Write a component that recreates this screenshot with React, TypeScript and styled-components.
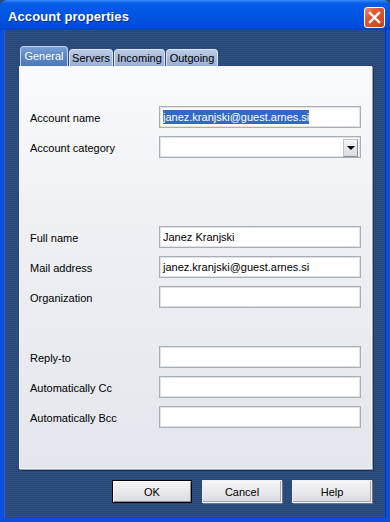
import React from "react";
import styled, { createGlobalStyle } from "styled-components";

const Global = createGlobalStyle`
  html, body { margin: 0; padding: 0; background: #2b4a79; }
  body { font-family: "Liberation Sans", Arial, sans-serif; font-size: 11px; }
`;

const Window = styled.div`
  width: 390px;
  height: 522px;
  display: flex;
  flex-direction: column;
  box-sizing: border-box;
  overflow: hidden;
`;

const TitleBar = styled.div`
  height: 30px;
  flex: none;
  display: flex;
  align-items: center;
  justify-content: space-between;
  padding: 3px 5px 0 8px;
  box-sizing: border-box;
  border-radius: 7px 7px 0 0;
  background: linear-gradient(
    to bottom,
    #3a8cf8 0px,
    #0a5ee8 3px,
    #0058e6 10px,
    #0053e0 20px,
    #0049d6 28px,
    #003fc8 30px
  );
`;

const Title = styled.span`
  color: #fff;
  font-weight: bold;
  font-size: 13px;
  letter-spacing: 0.1px;
  text-shadow: 1px 1px 0 #0b2b8f;
`;

const CloseButton = styled.div`
  width: 21px;
  height: 21px;
  box-sizing: border-box;
  border: 1px solid #fff;
  border-radius: 3px;
  background: linear-gradient(135deg, #f08a6a 0%, #e2582f 35%, #c9421c 100%);
  display: flex;
  align-items: center;
  justify-content: center;
  margin-top: 1px;
`;

const Body = styled.div`
  flex: 1;
  display: flex;
  flex-direction: column;
  border-left: 4px solid #0a4fe0;
  border-right: 4px solid #0a4fe0;
  border-bottom: 4px solid #0a4fe0;
  box-shadow: inset 1px 0 0 #1c64f0, inset -1px 0 0 #0038c0;
  padding: 16px 14px 0 15px;
  background: repeating-linear-gradient(
    to bottom,
    #2e4f81 0px,
    #2e4f81 1px,
    #284676 1px,
    #284676 2px
  );
`;

const TabRow = styled.div`
  display: flex;
  align-items: flex-end;
  height: 20px;
  padding-left: 1px;
`;

const Tab = styled.div<{ $active?: boolean; $w: number }>`
  box-sizing: border-box;
  width: ${(p) => p.$w}px;
  height: ${(p) => (p.$active ? "20px" : "17px")};
  padding-top: ${(p) => (p.$active ? "2px" : "1px")};
  margin-right: 1px;
  text-align: center;
  white-space: nowrap;
  border: 1px solid ${(p) => (p.$active ? "#c7d5ec" : "#dce5f3")};
  border-bottom: none;
  border-radius: 4px 4px 0 0;
  font-size: 11px;
  line-height: 15px;
  color: ${(p) => (p.$active ? "#fff" : "#000")};
  background: ${(p) =>
    p.$active
      ? "linear-gradient(to bottom, #7aa0d6 0%, #5a86c4 50%, #4b78b9 100%)"
      : "linear-gradient(to bottom, #bccbe6 0%, #a6b9da 60%, #9aafd3 100%)"};
`;

const Panel = styled.div`
  box-sizing: border-box;
  width: 353px;
  height: 403px;
  border: 1px solid #f4f5f8;
  box-shadow: 1px 1px 0 #9aa3b4, 2px 2px 0 #1d3357;
  background: linear-gradient(
    to bottom,
    #f9fafc 0%,
    #eef0f4 40%,
    #e3e6ec 100%
  );
  padding: 39px 10px 0 10px;
  display: flex;
  flex-direction: column;
`;

const Group = styled.div<{ $gap: number }>`
  display: flex;
  flex-direction: column;
  gap: 8px;
  margin-top: ${(p) => p.$gap}px;
`;

const Row = styled.div`
  display: flex;
  align-items: center;
  height: 22px;
`;

const Label = styled.span`
  width: 129px;
  flex: none;
  color: #000;
  font-size: 11px;
  padding-top: 1px;
`;

const Field = styled.div`
  box-sizing: border-box;
  width: 202px;
  height: 22px;
  border: 1px solid #a9adb5;
  box-shadow: inset 0 0 0 1px #dfe2e7;
  background: #fff;
  display: flex;
  align-items: center;
  padding: 0 3px;
  font-size: 11px;
  color: #000;
  position: relative;
`;

const Selected = styled.span`
  background: #316ac5;
  color: #fff;
  line-height: 14px;
`;

const DropButton = styled.div`
  position: absolute;
  right: 2px;
  top: 2px;
  width: 15px;
  height: 18px;
  box-sizing: border-box;
  border: 1px solid #c2c5cb;
  border-right-color: #8a8e96;
  border-bottom-color: #8a8e96;
  background: linear-gradient(to bottom, #f4f4f6, #d8dbe0);
  display: flex;
  align-items: center;
  justify-content: center;
`;

const Arrow = styled.div`
  width: 0;
  height: 0;
  border-left: 4px solid transparent;
  border-right: 4px solid transparent;
  border-top: 4px solid #000;
`;

const ButtonRow = styled.div`
  display: flex;
  justify-content: flex-end;
  gap: 10px;
  margin-top: 11px;
`;

const Button = styled.div<{ $default?: boolean }>`
  box-sizing: border-box;
  width: 80px;
  height: 23px;
  display: flex;
  align-items: center;
  justify-content: center;
  font-size: 11px;
  color: #000;
  background: linear-gradient(to bottom, #f6f6f8 0%, #e9e9ec 50%, #d9dade 100%);
  border: 1px solid ${(p) => (p.$default ? "#000" : "#f0f0f2")};
  box-shadow: ${(p) =>
    p.$default
      ? "inset 1px 1px 0 #fff, inset -1px -1px 0 #8c8c90"
      : "1px 1px 0 #6e7686, inset -1px -1px 0 #a7a9ae"};
`;

const tabs = [
  { label: "General", w: 48 },
  { label: "Servers", w: 44 },
  { label: "Incoming", w: 51 },
  { label: "Outgoing", w: 52 },
];

const fields: { label: string; value?: string }[][] = [
  [{ label: "Full name", value: "Janez Kranjski" }, { label: "Mail address", value: "janez.kranjski@guest.arnes.si" }, { label: "Organization" }],
  [{ label: "Reply-to" }, { label: "Automatically Cc" }, { label: "Automatically Bcc" }],
];

export default function App() {
  return (
    <>
      <Global />
      <Window>
        <TitleBar>
          <Title>Account properties</Title>
          <CloseButton>
            <svg width="13" height="13" viewBox="0 0 13 13">
              <path d="M2 2 L11 11 M11 2 L2 11" stroke="#fff" strokeWidth="2.4" strokeLinecap="square" />
            </svg>
          </CloseButton>
        </TitleBar>
        <Body>
          <TabRow>
            {tabs.map((t, i) => (
              <Tab key={t.label} $w={t.w} $active={i === 0}>
                {t.label}
              </Tab>
            ))}
          </TabRow>
          <Panel>
            <Group $gap={0}>
              <Row>
                <Label>Account name</Label>
                <Field>
                  <Selected>janez.kranjski@guest.arnes.si</Selected>
                </Field>
              </Row>
              <Row>
                <Label>Account category</Label>
                <Field>
                  <DropButton>
                    <Arrow />
                  </DropButton>
                </Field>
              </Row>
            </Group>
            {fields.map((g, i) => (
              <Group key={i} $gap={i === 0 ? 68 : 38}>
                {g.map((f) => (
                  <Row key={f.label}>
                    <Label>{f.label}</Label>
                    <Field>{f.value}</Field>
                  </Row>
                ))}
              </Group>
            ))}
          </Panel>
          <ButtonRow>
            <Button $default>OK</Button>
            <Button>Cancel</Button>
            <Button>Help</Button>
          </ButtonRow>
        </Body>
      </Window>
    </>
  );
}
